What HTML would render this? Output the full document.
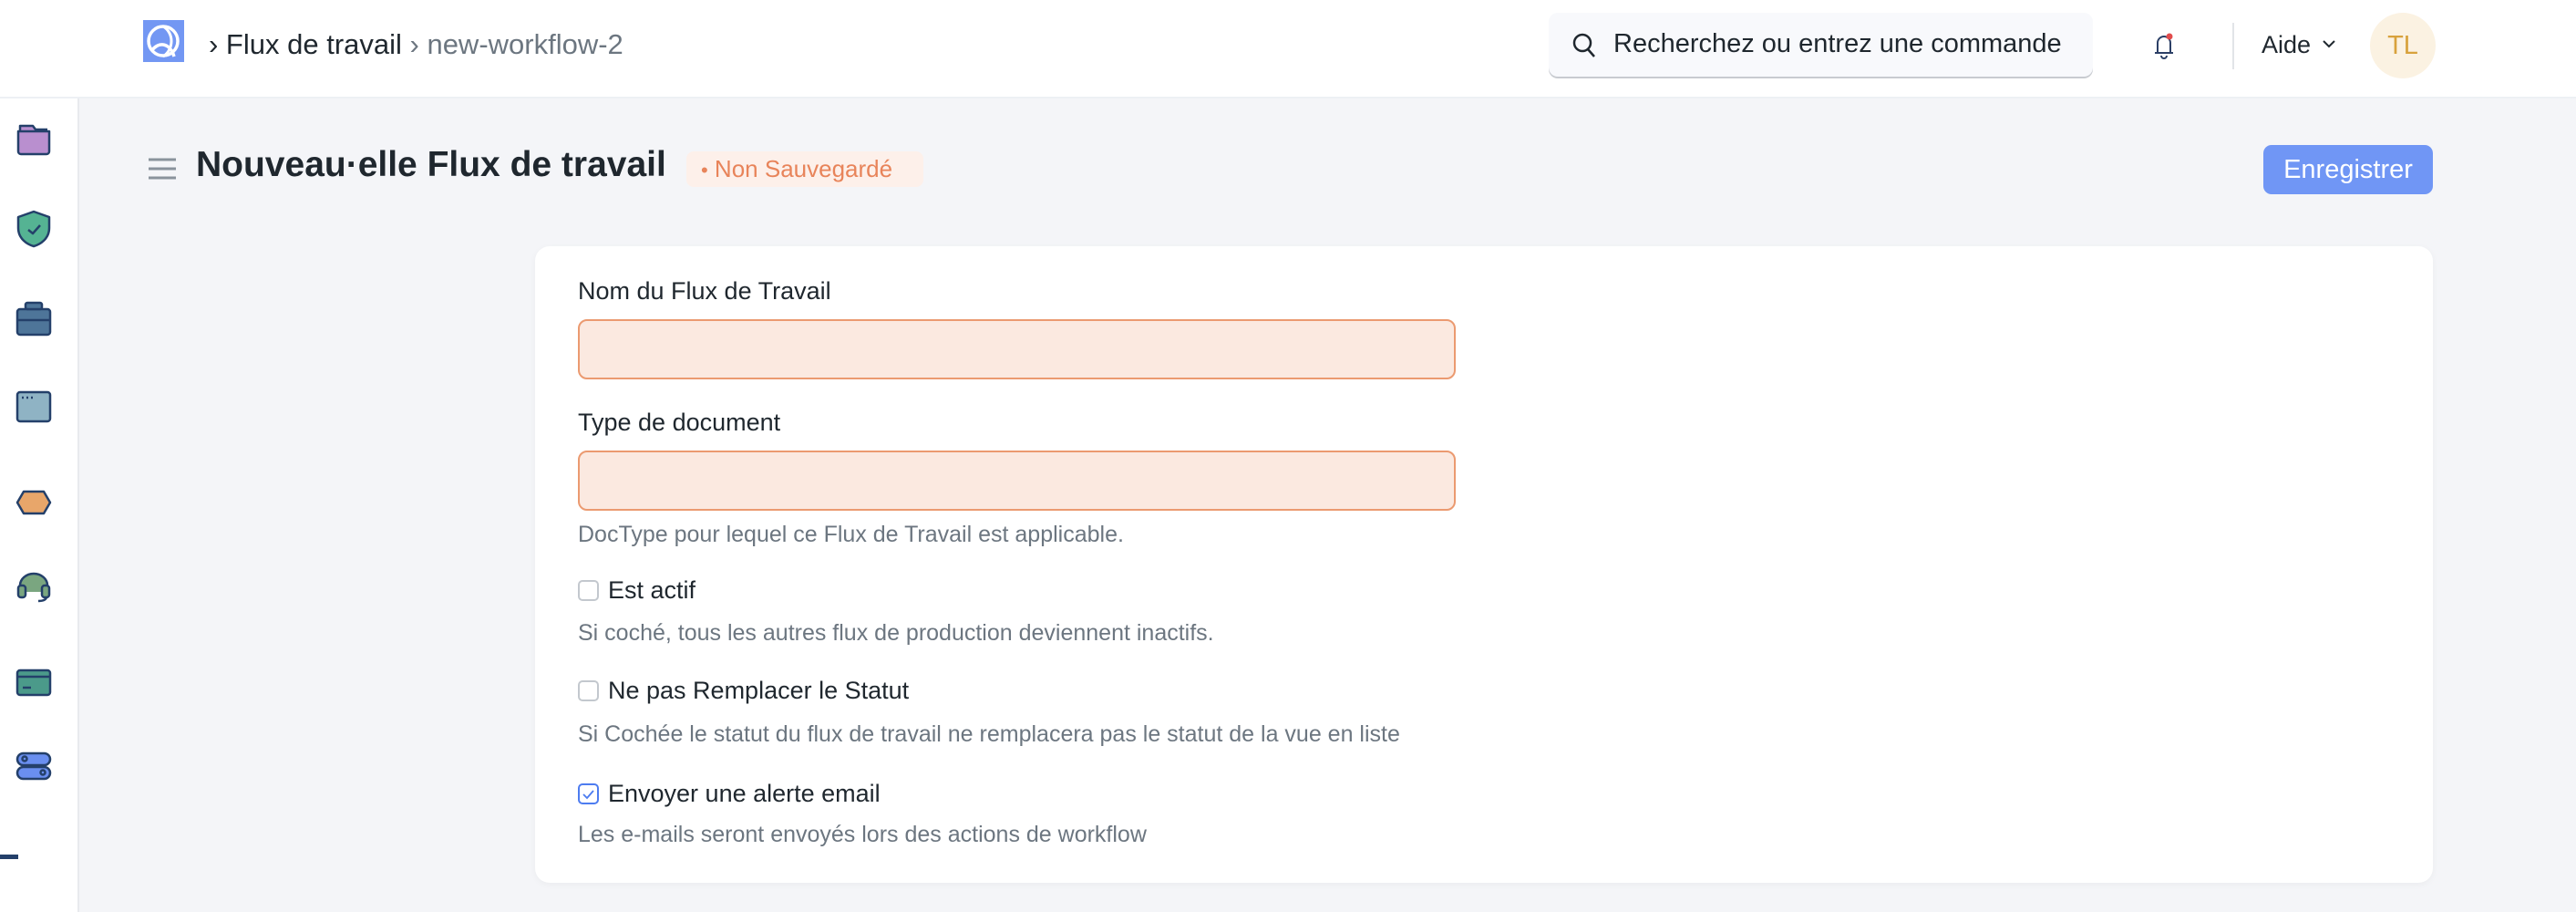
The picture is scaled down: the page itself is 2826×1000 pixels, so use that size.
<!DOCTYPE html>
<html><head><meta charset="utf-8"><style>
*{box-sizing:border-box;margin:0;padding:0}
body{width:2826px;height:1000px;overflow:hidden;background:#f4f5f8;font-family:"Liberation Sans",sans-serif;color:#1f272e;position:relative}
.abs{position:absolute}
.hdr{left:0;top:0;width:2826px;height:108px;background:#fff;border-bottom:2px solid #edf0f4}
.side{left:0;top:108px;width:87px;height:892px;background:#fff;border-right:2px solid #e8eaee}
.t{white-space:nowrap;line-height:1}
.lbl{font-size:27px;color:#1f272e}
.help{font-size:25px;color:#6c7680}
.inp{left:634px;width:963px;height:66px;background:#fbe9e0;border:2px solid #eb9a70;border-radius:10px}
.cb{left:634px;width:23px;height:23px;border:2px solid #c3c8ce;border-radius:5px;background:#fff}
</style></head><body>
<div class="abs hdr"></div>
<svg class="abs" style="left:157px;top:22px" width="45" height="46" viewBox="0 0 45 46"><rect width="45" height="46" fill="#7397f3"/><circle cx="22" cy="23" r="16" fill="none" stroke="#fff" stroke-width="3.5"/><path d="M9 34 C18 22 30 26 34 40" fill="none" stroke="#fff" stroke-width="3.5"/><path d="M22 7 C34 14 34 32 22 40" fill="none" stroke="#fff" stroke-width="3"/></svg>
<div class="abs t" style="left:229px;top:33px;font-size:31px">› Flux de travail <span style="color:#6c7680">› new-workflow-2</span></div>
<div class="abs" style="left:1699px;top:14px;width:597px;height:70px;background:#f8f9fc;border-radius:10px;box-shadow:0 2px 0 #c8cbd0"></div>
<svg class="abs" style="left:1724px;top:35px" width="28" height="30" viewBox="0 0 28 30"><circle cx="12" cy="12" r="9" fill="none" stroke="#1f272e" stroke-width="2.5"/><path d="M18 19 L25 27" stroke="#1f272e" stroke-width="2.5"/></svg>
<div class="abs t" style="left:1770px;top:34px;font-size:29px;color:#1f272e">Recherchez ou entrez une commande</div>
<svg class="abs" style="left:2360px;top:34px" width="28" height="32" viewBox="0 0 28 32"><path d="M7 24 V13 a7 7 0 0 1 14 0 V24 Z M4 24 H24 M11 27 a3 3 0 0 0 6 0" fill="none" stroke="#2b3f66" stroke-width="2"/><circle cx="20" cy="6" r="3.5" fill="#e24c4c"/></svg>
<div class="abs" style="left:2449px;top:25px;width:2px;height:51px;background:#e2e4e8"></div>
<div class="abs t" style="left:2481px;top:36px;font-size:27px">Aide</div>
<svg class="abs" style="left:2546px;top:42px" width="18" height="12" viewBox="0 0 18 12"><path d="M3 3 L9 9 L15 3" fill="none" stroke="#1f272e" stroke-width="2"/></svg>
<div class="abs" style="left:2600px;top:14px;width:72px;height:72px;border-radius:50%;background:#fbf2e2;color:#d8a23c;font-size:29px;line-height:72px;text-align:center">TL</div>

<div class="abs side"></div>
<svg class="abs" style="left:14px;top:118px" width="46" height="860" viewBox="0 0 46 860">
<g stroke="#24406a" stroke-width="2.5" stroke-linejoin="round">
<path d="M8 26 V20 H22 L25 24 H38" fill="#b98fcf"/><path d="M6 26 H40 V48 a3 3 0 0 1-3 3 H9 a3 3 0 0 1-3-3 Z" fill="#b98fcf"/>
<path d="M23 114 L40 120 V132 C40 144 30 150 23 152 C16 150 6 144 6 132 V120 Z" fill="#55b393"/><path d="M17 134 l5 4 l8-9" fill="none"/>
<rect x="5" y="221" width="36" height="28" rx="3" fill="#4e7599"/><rect x="14" y="214" width="18" height="7" rx="2" fill="#4e7599"/><path d="M5 233 H41"/>
<rect x="5" y="312" width="36" height="32" rx="3" fill="#8fb3c4"/><path d="M10 318 h2 M15 318 h2 M20 318 h2"/>
<path d="M5 433 L12 421 H34 L41 433 L34 445 H12 Z" fill="#e8a66a"/>
<path d="M8 531 V524 a15 13 0 0 1 30 0 V531" fill="#7aa680"/><rect x="6" y="524" width="8" height="13" rx="3" fill="#7aa680"/><rect x="32" y="524" width="8" height="13" rx="3" fill="#7aa680"/><path d="M37 537 Q36 541 28 541" fill="none"/>
<rect x="5" y="617" width="36" height="27" rx="3" fill="#4b9a8a"/><path d="M5 624 H41 M11 636 H20"/>
<rect x="5" y="708" width="36" height="13" rx="6.5" fill="#6a8ff0"/><rect x="5" y="723" width="36" height="13" rx="6.5" fill="#6a8ff0"/><circle cx="13" cy="714" r="2.5" fill="none"/><circle cx="33" cy="729" r="2.5" fill="none"/>
</g></svg>
<div class="abs" style="left:0;top:937px;width:20px;height:5px;background:#24406a"></div>

<svg class="abs" style="left:162px;top:172px" width="32" height="26" viewBox="0 0 32 26"><path d="M1 3 H31 M1 13 H31 M1 23 H31" stroke="#8a939c" stroke-width="3"/></svg>
<div class="abs t" style="left:215px;top:161px;font-size:39px;font-weight:bold;color:#1f272e">Nouveau·elle Flux de travail</div>
<div class="abs t" style="left:753px;top:166px;width:260px;height:39px;background:#fdf0ea;border-radius:8px;color:#e8845a;font-size:26px;line-height:39px;padding-left:16px"><span style="font-size:22px">•</span> Non Sauvegardé</div>
<div class="abs t" style="left:2483px;top:159px;width:186px;height:54px;background:#7096f5;border-radius:9px;color:#fff;font-size:29px;line-height:54px;text-align:center">Enregistrer</div>

<div class="abs" style="left:587px;top:270px;width:2082px;height:698px;background:#fff;border-radius:16px;box-shadow:0 2px 8px rgba(0,0,0,.04)"></div>
<div class="abs t lbl" style="left:634px;top:306px">Nom du Flux de Travail</div>
<div class="abs inp" style="top:350px"></div>
<div class="abs t lbl" style="left:634px;top:450px">Type de document</div>
<div class="abs inp" style="top:494px"></div>
<div class="abs t help" style="left:634px;top:574px">DocType pour lequel ce Flux de Travail est applicable.</div>
<div class="abs cb" style="top:636px"></div>
<div class="abs t lbl" style="left:667px;top:634px;font-size:27px">Est actif</div>
<div class="abs t help" style="left:634px;top:682px">Si coché, tous les autres flux de production deviennent inactifs.</div>
<div class="abs cb" style="top:746px"></div>
<div class="abs t lbl" style="left:667px;top:744px;font-size:27px">Ne pas Remplacer le Statut</div>
<div class="abs t help" style="left:634px;top:793px">Si Cochée le statut du flux de travail ne remplacera pas le statut de la vue en liste</div>
<div class="abs cb" style="top:859px;border-color:#4d7cf0"></div>
<svg class="abs" style="left:634px;top:859px" width="23" height="23" viewBox="0 0 23 23"><path d="M6 12 l4 4 l7-8" fill="none" stroke="#4d7cf0" stroke-width="1.8"/></svg>
<div class="abs t lbl" style="left:667px;top:857px;font-size:27px">Envoyer une alerte email</div>
<div class="abs t help" style="left:634px;top:903px">Les e-mails seront envoyés lors des actions de workflow</div>
</body></html>
